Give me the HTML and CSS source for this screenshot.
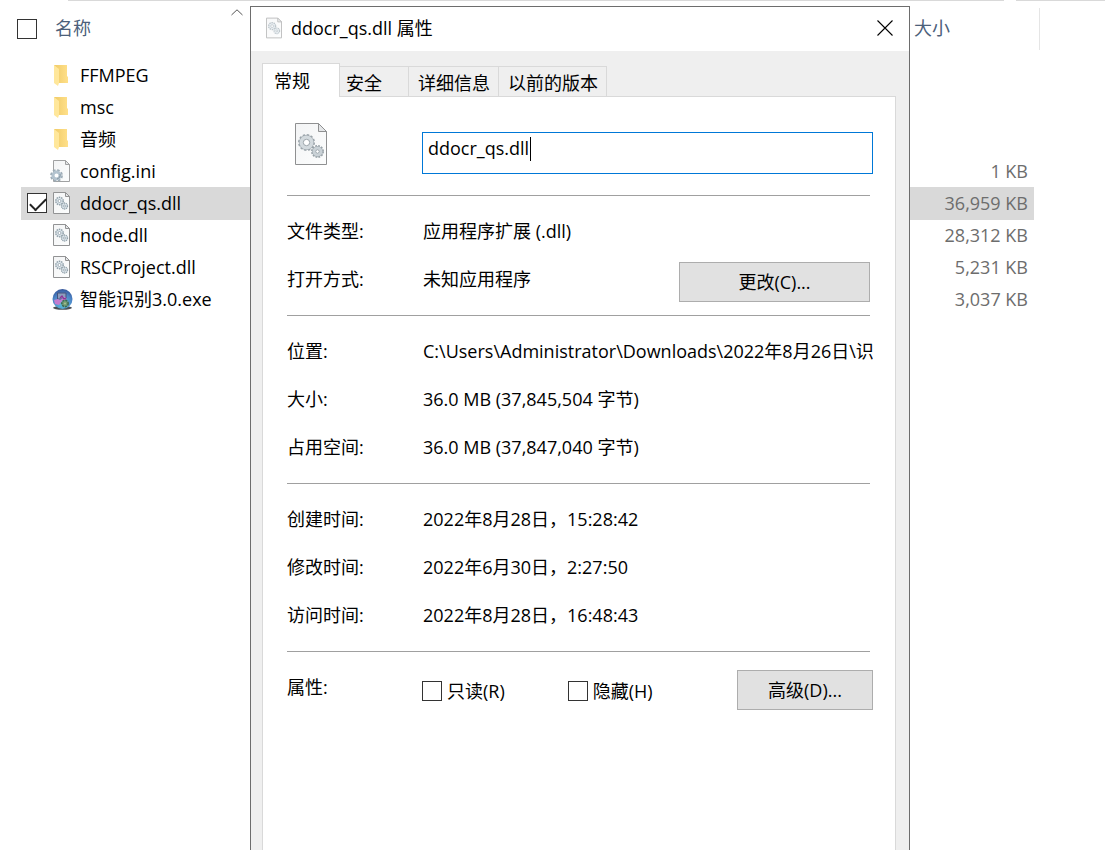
FILE: index.html
```html
<!DOCTYPE html>
<html lang="zh-CN">
<head>
<meta charset="utf-8">
<title>ddocr_qs.dll 属性</title>
<link rel="stylesheet" href="styles.css">
</head>
<body>
<svg class="defs" aria-hidden="true">
  <defs>
    <linearGradient id="paper" x1="0" y1="0" x2="1" y2="1"><stop offset="0" stop-color="#f3f4f5"/><stop offset="1" stop-color="#fcfdfd"/></linearGradient>
    <linearGradient id="fold" x1="0" y1="0" x2="1" y2="0"><stop offset="0" stop-color="#f0cb68"/><stop offset="1" stop-color="#ffe08a"/></linearGradient>
    <radialGradient id="orb" cx=".5" cy=".75" r=".8"><stop offset="0" stop-color="#5cc3dc"/><stop offset=".6" stop-color="#4d86c8"/><stop offset="1" stop-color="#2f4c90"/></radialGradient>
    <symbol id="dll" viewBox="0 0 32 42">
      <path d="M.5 .5H23.5L31.5 8.500V41.500H.5Z" fill="url(#paper)" stroke="#8f9091"/>
      <path d="M23.500 .5V8.500H31.500Z" fill="#e4e6e8" stroke="#8f9091"/>
      <circle cx="11.500" cy="19.500" r="7" fill="none" stroke="#9ba4aa" stroke-width="3" stroke-dasharray="2.200 1.465"/>
      <circle cx="11.500" cy="19.500" r="5.200" fill="#fff" stroke="#9ba4aa" stroke-width="4.600"/>
      <circle cx="11.500" cy="19.500" r="5" fill="#fff" stroke="#d3dade" stroke-width="4"/>
      <circle cx="11.500" cy="19.500" r="3.200" fill="#fff" stroke="#9ba4aa"/>
      <circle cx="22.500" cy="28.500" r="5.300" fill="none" stroke="#98a2a8" stroke-width="2.400" stroke-dasharray="1.665 1.110"/>
      <circle cx="22.500" cy="28.500" r="3.700" fill="#fff" stroke="#98a2a8" stroke-width="3.400"/>
      <circle cx="22.500" cy="28.500" r="3.600" fill="#fff" stroke="#c9d1d6" stroke-width="2.800"/>
      <circle cx="22.500" cy="28.500" r="1.800" fill="#fff" stroke="#919da5"/>
    </symbol>
    <symbol id="dll-small" viewBox="0 0 17 22">
      <path d="M.5 .5H12.500L16.500 4.500V21.500H.5Z" fill="url(#paper)" stroke="#929394"/>
      <path d="M12.500 .5V4.500H16.500Z" fill="#e4e6e8" stroke="#929394"/>
      <circle cx="6.500" cy="9" r="3.700" fill="#dce5eb" stroke="#91a0a9" stroke-width="1.500" stroke-dasharray="1.500 .825"/>
      <circle cx="6.500" cy="9" r="1.500" fill="#fff" stroke="#91a0a9" stroke-width=".8"/>
      <circle cx="11.500" cy="14" r="3" fill="#dce5eb" stroke="#91a0a9" stroke-width="1.300" stroke-dasharray="1.200 .685"/>
      <circle cx="11.500" cy="14" r="1" fill="#fff" stroke="#91a0a9" stroke-width=".8"/>
    </symbol>
    <symbol id="ini" viewBox="0 0 20 22">
      <path d="M3.500 .5H15.500L19.500 4.500V21.500H3.500Z" fill="url(#paper)" stroke="#a0a1a2"/>
      <path d="M15.500 .5V4.500H19.500Z" fill="#e4e6e8" stroke="#a0a1a2"/>
      <circle cx="6.500" cy="15.500" r="5.400" fill="none" stroke="#9cabb5" stroke-width="2" stroke-dasharray="2.540 1.700"/>
      <circle cx="6.500" cy="15.500" r="3.500" fill="#fff" stroke="#b3c3cf" stroke-width="3"/>
      <path d="M7 19A4 4 0 0 0 10 14" fill="none" stroke="#8596a2"/>
    </symbol>
    <symbol id="folder" viewBox="0 0 14 21">
      <path d="M0 0H13V11L14 12V18H4Z" fill="url(#fold)"/>
      <path d="M0 0L5 4V18L4 21L0 18Z" fill="#ffe79b"/>
    </symbol>
    <symbol id="app" viewBox="0 0 21 21">
      <ellipse cx="10.500" cy="18.800" rx="9.500" ry="2" fill="#4a4f55"/>
      <circle cx="10.500" cy="10" r="10" fill="url(#orb)"/>
      <path d="M5.500 4H14V10H5.500Z" fill="#8d9dbd" stroke="#44527c"/>
      <path d="M2 11L6 10L8 11L13 8L15 10L10 12L7 16L3 15Z" fill="#c47ccf"/>
      <path d="M8 9L10 7L12 10L14 9" fill="none" stroke="#8a3496" stroke-width="1.300"/>
      <circle cx="13" cy="14.500" r="3.200" fill="#6f9a76" stroke="#3f6a52" stroke-width="1.500" stroke-dasharray="2 1"/>
      <circle cx="13" cy="14.500" r="1" fill="#a8c18c"/>
    </symbol>
  </defs>
</svg>

<main class="explorer">
  <div class="top-line"><span class="line-main"></span><span class="line-side"></span></div>
  <table class="files">
    <colgroup><col class="col-check"><col><col class="col-size"><col class="col-edge"></colgroup>
    <thead>
      <tr>
        <th class="check-head"><input class="box" type="checkbox" aria-label="全选"></th>
        <th class="name-head">名称<svg class="sort" viewBox="0 0 12 7" aria-hidden="true"><path d="M.5 6L6 .8L11.500 6" fill="none" stroke="#555"/></svg></th>
        <th class="size-head">大小</th>
        <th class="edge"><span class="edge-line"></span></th>
      </tr>
    </thead>
    <tbody>
      <tr><td></td><td><span class="file"><svg class="ico folder"><use href="#folder"/></svg>FFMPEG</span></td><td class="size"></td><td></td></tr>
      <tr><td></td><td><span class="file"><svg class="ico folder"><use href="#folder"/></svg>msc</span></td><td class="size"></td><td></td></tr>
      <tr><td></td><td><span class="file"><svg class="ico folder"><use href="#folder"/></svg>音频</span></td><td class="size"></td><td></td></tr>
      <tr><td></td><td><span class="file"><svg class="ico ini"><use href="#ini"/></svg>config.ini</span></td><td class="size">1 KB</td><td></td></tr>
      <tr class="selected"><td><input class="box" type="checkbox" checked aria-label="选择 ddocr_qs.dll"></td><td><span class="file"><svg class="ico dll"><use href="#dll-small"/></svg>ddocr_qs.dll</span></td><td class="size">36,959 KB</td><td></td></tr>
      <tr><td></td><td><span class="file"><svg class="ico dll"><use href="#dll-small"/></svg>node.dll</span></td><td class="size">28,312 KB</td><td></td></tr>
      <tr><td></td><td><span class="file"><svg class="ico dll"><use href="#dll-small"/></svg>RSCProject.dll</span></td><td class="size">5,231 KB</td><td></td></tr>
      <tr><td></td><td><span class="file"><svg class="ico app"><use href="#app"/></svg>智能识别3.0.exe</span></td><td class="size">3,037 KB</td><td></td></tr>
    </tbody>
  </table>
</main>

<section class="dialog" role="dialog" aria-labelledby="dialog-title">
  <header class="titlebar">
    <svg class="title-ico"><use href="#dll-small"/></svg>
    <h1 class="title" id="dialog-title">ddocr_qs.dll 属性</h1>
    <button class="close" type="button" aria-label="关闭"><svg viewBox="0 0 16 16" width="16" height="16"><path d="M.5 .5L15.500 15.500M15.500 .5L.5 15.500" fill="none" stroke="#000" stroke-width="1.100"/></svg></button>
  </header>
  <div class="tabs" role="tablist">
    <button class="tab active" type="button" role="tab" aria-selected="true">常规</button>
    <button class="tab security" type="button" role="tab">安全</button>
    <button class="tab" type="button" role="tab">详细信息</button>
    <button class="tab" type="button" role="tab">以前的版本</button>
  </div>
  <div class="panel" role="tabpanel">
    <div class="head">
      <svg class="file-ico"><use href="#dll"/></svg>
      <div class="field"><input class="filename" type="text" value="ddocr_qs.dll" aria-label="文件名"><span class="caret"></span></div>
    </div>
    <dl class="group">
      <div class="row"><dt>文件类型:</dt><dd>应用程序扩展 (.dll)</dd></div>
      <div class="row"><dt>打开方式:</dt><dd>未知应用程序</dd><dd class="action"><button class="btn change" type="button">更改(C)...</button></dd></div>
    </dl>
    <dl class="group">
      <div class="row"><dt>位置:</dt><dd class="path">C:\Users\Administrator\Downloads\2022年8月26日\识</dd></div>
      <div class="row"><dt>大小:</dt><dd>36.0 MB (37,845,504 字节)</dd></div>
      <div class="row"><dt>占用空间:</dt><dd>36.0 MB (37,847,040 字节)</dd></div>
    </dl>
    <dl class="group">
      <div class="row"><dt>创建时间:</dt><dd>2022年8月28日，15:28:42</dd></div>
      <div class="row"><dt>修改时间:</dt><dd>2022年6月30日，2:27:50</dd></div>
      <div class="row"><dt>访问时间:</dt><dd>2022年8月28日，16:48:43</dd></div>
    </dl>
    <div class="group">
      <div class="row"><span class="attr-name">属性:</span>
        <div class="attrs">
          <label class="attr"><input class="box" type="checkbox">只读(R)</label>
          <label class="attr"><input class="box" type="checkbox">隐藏(H)</label>
        </div>
        <button class="btn advanced" type="button">高级(D)...</button>
      </div>
    </div>
  </div>
</section>
</body>
</html>
```
FILE: styles.css
```css
* { box-sizing: border-box; }

body {
  margin: 0;
  min-height: 100vh;
  position: relative;
  overflow: hidden;
  background: #fff;
  color: #000;
  font: 18px/24px "Open Sans", "Noto Sans CJK SC", sans-serif;
}

button, input { font: inherit; color: inherit; }

.defs { position: absolute; width: 0; height: 0; }

/* File list */
.top-line { display: flex; gap: 12px; padding-left: 68px; height: 8px; }
.line-main { flex: 1; height: 1px; background: #d9d9d9; }
.line-side { width: 89px; height: 1px; background: #d9d9d9; }

.files {
  width: calc(100% - 86px);
  margin-left: 21px;
  table-layout: fixed;
  border-collapse: collapse;
}
.col-check { width: 30px; }
.col-size { width: 125px; }
.col-edge { width: 6px; }

.files th {
  height: 51px;
  padding: 0;
  vertical-align: top;
  text-align: left;
  font-weight: 400;
  line-height: 40px;
  color: #4c607a;
}
.files .check-head { padding-top: 11px; line-height: 0; }
.check-head .box { margin-left: -4px; }
.files .name-head { padding-left: 4px; }
.files .size-head { padding-left: 5px; }
.sort { width: 12px; height: 7px; margin-left: 140px; vertical-align: top; margin-top: 1px; }
.edge-line { display: block; width: 1px; height: 42px; margin-left: 5px; background: #e5e5e5; }

.files td { height: 32px; padding: 0; vertical-align: middle; }
.files td .box { display: block; margin-left: 6px; }
.file { display: flex; align-items: center; }
.ico { flex: none; }
.ico.folder { width: 14px; height: 21px; margin: 0 12px 0 3px; }
.ico.dll { width: 17px; height: 22px; margin: 0 10px 0 2px; }
.ico.ini { width: 20px; height: 22px; margin: 0 10px 0 -1px; }
.ico.app { width: 21px; height: 21px; margin: 0 7px 0 1px; }
.files .size { padding-right: 6px; text-align: right; color: #6d6d6d; }
.selected td:not(:last-child) { background: #d9d9d9; box-shadow: 0 1px #d9d9d9; }

.box {
  appearance: none;
  flex: none;
  width: 20px;
  height: 20px;
  margin: 0;
  border: 1px solid #333;
  background: #fff;
}
.box:checked {
  background: linear-gradient(#fff, #fff);
}
.box:checked::before {
  content: "";
  display: block;
  width: 14px;
  height: 7px;
  margin: 4px 0 0 2px;
  border: solid #222;
  border-width: 0 0 2px 2px;
  transform: rotate(-45deg);
}

/* Properties dialog, floating over the file list */
.dialog {
  position: absolute;
  top: 6px;
  left: 250px;
  right: 195px;
  bottom: 0;
  display: flex;
  flex-direction: column;
  border: 1px solid #6d6d6d;
  border-bottom: 0;
  background: #efefef;
}
.titlebar {
  display: flex;
  align-items: center;
  height: 44px;
  padding: 0 16px 2px 15px;
  background: #fff;
}
.title-ico { width: 16px; height: 22px; opacity: .6; }
.title { flex: 1; margin: 0 0 0 9px; font-size: 18px; font-weight: 400; }
.close { display: flex; padding: 0; border: 0; background: none; }

.tabs {
  position: relative;
  z-index: 1;
  display: flex;
  align-items: flex-end;
  height: 46px;
  margin-bottom: -1px;
  padding-left: 11px;
}
.tab {
  height: 31px;
  padding: 3px 8px 0 9px;
  border: 1px solid #d9d9d9;
  border-left: 0;
  background: #efefef;
  line-height: 24px;
  text-align: left;
}
.tab.security { width: 69px; padding-left: 6px; }
.tab.active {
  width: 78px;
  height: 34px;
  padding: 0 0 0 11px;
  border-left: 1px solid #d9d9d9;
  border-bottom: 0;
  background: #fff;
}

.panel {
  flex: 1;
  margin: 0 13px 0 11px;
  padding: 26px 22px 0 24px;
  border: 1px solid #d9d9d9;
  border-bottom: 0;
  background: #fff;
}
.head { display: grid; grid-template-columns: 127px 1fr; padding: 0 0 21px 8px; }
.file-ico { width: 32px; height: 42px; }
.field { position: relative; margin-top: 9px; }
.filename {
  display: block;
  width: 100%;
  height: 42px;
  padding: 0 5px 10px 5px;
  border: 1px solid #0078d7;
  border-radius: 0;
  outline: 0;
  background: #fff;
}
.caret { position: absolute; top: 5px; left: 108px; width: 1px; height: 24px; background: #000; }

.group {
  margin: 0;
  padding: 12px 0;
  background: linear-gradient(#a0a0a0, #a0a0a0) 0 0 / calc(100% - 3px) 1px no-repeat;
}
.row { display: flex; align-items: center; height: 48px; }
.row dt, .attr-name { flex: none; width: 136px; }
.row dd { margin: 0; white-space: nowrap; }
.row .path { flex: 1; min-width: 0; overflow: hidden; }
.row .action { margin: 0 3px 1px auto; align-self: flex-end; }
.btn {
  display: block;
  height: 40px;
  padding: 0;
  border: 1px solid #adadad;
  background: #e1e1e1;
}
.change { width: 191px; }
.advanced { width: 136px; margin: 0 0 1px auto; align-self: flex-end; }
.attrs { display: flex; gap: 63px; align-self: flex-end; margin-left: -1px; }
.attr { display: flex; align-items: center; gap: 5px; height: 40px; }
```
